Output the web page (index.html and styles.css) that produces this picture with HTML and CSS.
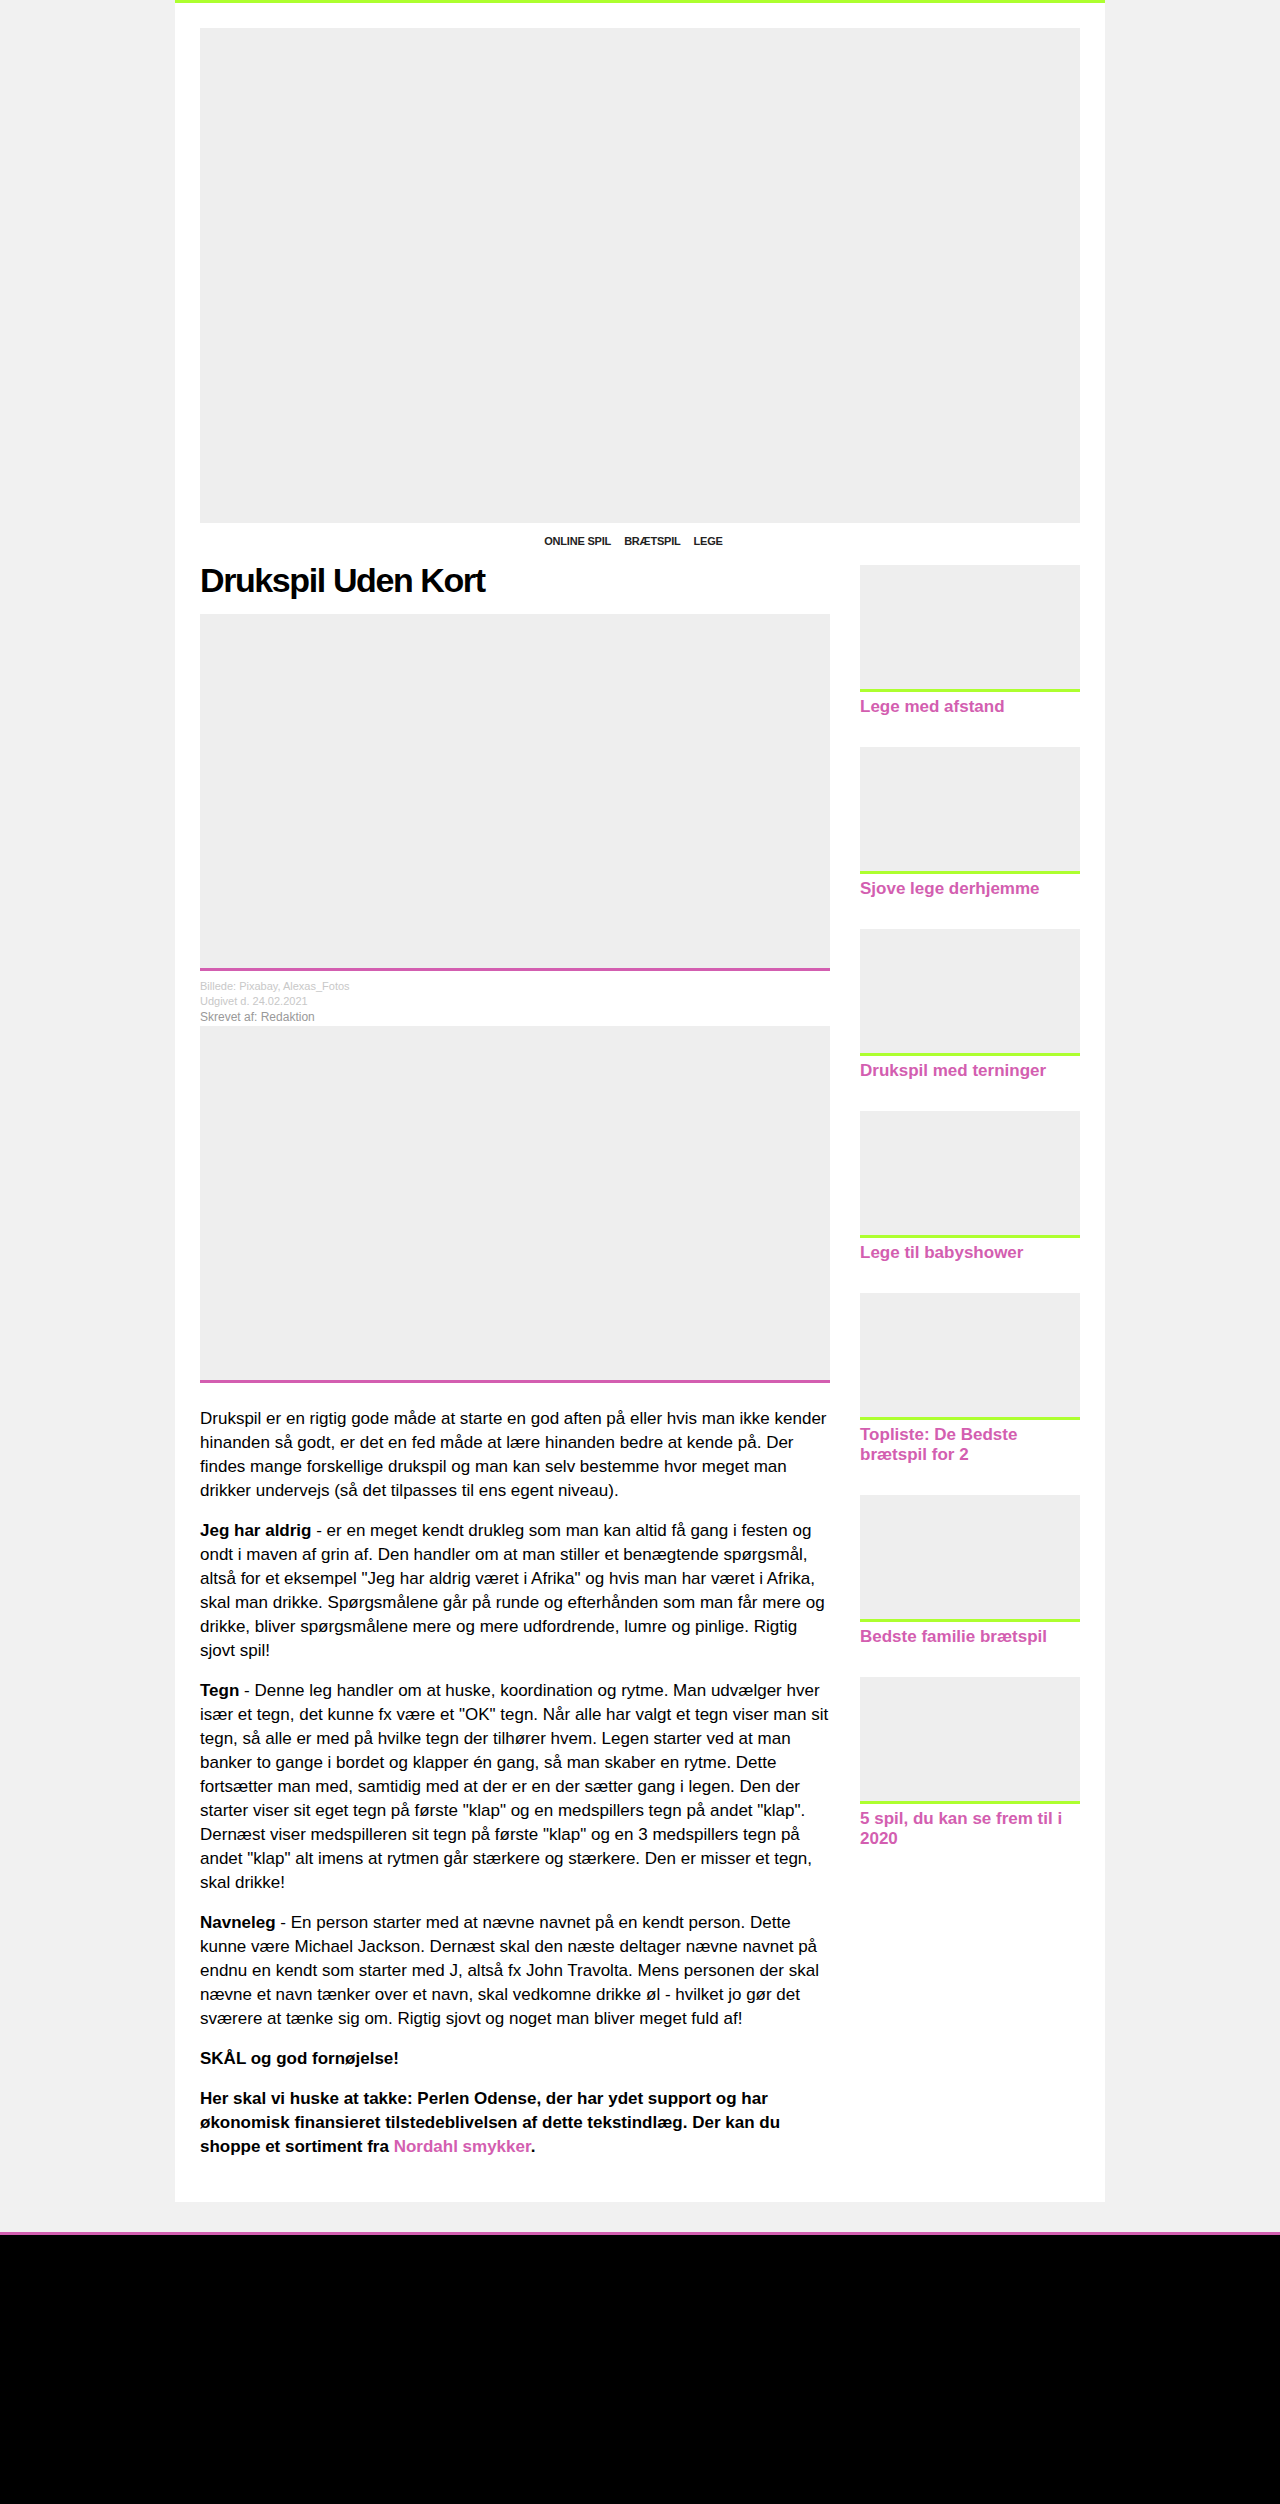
FILE: index.html
```html
<!DOCTYPE html>
<html lang="da">
<head>
<meta charset="utf-8">
<title>Drukspil Uden Kort</title>
<link rel="stylesheet" href="styles.css">
</head>
<body>
<div class="page">
  <div class="ad-top"></div>
  <nav class="nav">
    <a href="#">ONLINE SPIL</a>
    <a href="#">BRÆTSPIL</a>
    <a href="#">LEGE</a>
  </nav>
  <div class="row">
    <main class="main">
      <h1 class="title">Drukspil Uden Kort</h1>
      <div class="pic"></div>
      <div class="meta">
        <div class="meta-line">Billede: Pixabay, Alexas_Fotos</div>
        <div class="meta-line">Udgivet d. 24.02.2021</div>
        <div class="meta-author">Skrevet af: Redaktion</div>
      </div>
      <div class="pic"></div>
      <div class="article">
        <p>Drukspil er en rigtig gode måde at starte en god aften på eller hvis man ikke kender hinanden så godt, er det en fed måde at lære hinanden bedre at kende på. Der findes mange forskellige drukspil og man kan selv bestemme hvor meget man drikker undervejs (så det tilpasses til ens egent niveau).</p>
        <p><b>Jeg har aldrig</b> - er en meget kendt drukleg som man kan altid få gang i festen og ondt i maven af grin af. Den handler om at man stiller et benægtende spørgsmål, altså for et eksempel "Jeg har aldrig været i Afrika" og hvis man har været i Afrika, skal man drikke. Spørgsmålene går på runde og efterhånden som man får mere og drikke, bliver spørgsmålene mere og mere udfordrende, lumre og pinlige. Rigtig sjovt spil!</p>
        <p><b>Tegn</b> - Denne leg handler om at huske, koordination og rytme. Man udvælger hver især et tegn, det kunne fx være et "OK" tegn. Når alle har valgt et tegn viser man sit tegn, så alle er med på hvilke tegn der tilhører hvem. Legen starter ved at man banker to gange i bordet og klapper én gang, så man skaber en rytme. Dette fortsætter man med, samtidig med at der er en der sætter gang i legen. Den der starter viser sit eget tegn på første "klap" og en medspillers tegn på andet "klap". Dernæst viser medspilleren sit tegn på første "klap" og en 3 medspillers tegn på andet "klap" alt imens at rytmen går stærkere og stærkere. Den er misser et tegn, skal drikke!</p>
        <p><b>Navneleg</b> - En person starter med at nævne navnet på en kendt person. Dette kunne være Michael Jackson. Dernæst skal den næste deltager nævne navnet på endnu en kendt som starter med J, altså fx John Travolta. Mens personen der skal nævne et navn tænker over et navn, skal vedkomne drikke øl - hvilket jo gør det sværere at tænke sig om. Rigtig sjovt og noget man bliver meget fuld af!</p>
        <p><b>SKÅL og god fornøjelse!</b></p>
        <p><b>Her skal vi huske at takke: Perlen Odense, der har ydet support og har økonomisk finansieret tilstedeblivelsen af dette tekstindlæg. Der kan du shoppe et sortiment fra <a class="link" href="#">Nordahl smykker</a>.</b></p>
      </div>
    </main>
    <aside class="side">
      <a class="card" href="#"><div class="thumb"></div><div class="card-title">Lege med afstand</div></a>
      <a class="card" href="#"><div class="thumb"></div><div class="card-title">Sjove lege derhjemme</div></a>
      <a class="card" href="#"><div class="thumb"></div><div class="card-title">Drukspil med terninger</div></a>
      <a class="card" href="#"><div class="thumb"></div><div class="card-title">Lege til babyshower</div></a>
      <a class="card" href="#"><div class="thumb"></div><div class="card-title">Topliste: De Bedste brætspil for 2</div></a>
      <a class="card" href="#"><div class="thumb"></div><div class="card-title">Bedste familie brætspil</div></a>
      <a class="card" href="#"><div class="thumb"></div><div class="card-title">5 spil, du kan se frem til i 2020</div></a>
    </aside>
  </div>
</div>
<footer class="footer"></footer>
</body>
</html>
```

FILE: styles.css
```css
* { box-sizing: border-box; }

body {
  margin: 0;
  background: #f1f1f1;
  font-family: "Liberation Sans", Arial, sans-serif;
  color: #000;
}

.page {
  width: 930px;
  margin: 0 auto;
  background: #fff;
  border-top: 3px solid #adff2f;
  padding: 25px 25px 27px;
}

.ad-top {
  height: 495px;
  background: #eee;
}

.nav {
  display: flex;
  justify-content: center;
  margin: 11px 0 0;
  height: 28px;
  font-size: 11px;
  line-height: 14px;
  font-weight: bold;
  letter-spacing: -0.2px;
}

.nav a {
  color: #222;
  text-decoration: none;
  margin-right: 13px;
}

.row {
  display: flex;
  justify-content: space-between;
}

.main {
  width: 630px;
}

.title {
  margin: 0 0 15px;
  font-size: 34px;
  line-height: 37px;
  font-weight: bold;
  letter-spacing: -1.4px;
  color: #000;
}

.pic {
  height: 357px;
  background: #eee;
  border-bottom: 3px solid #d35eb0;
}

.meta {
  padding: 8px 0 1px;
}

.meta-line {
  font-size: 11px;
  line-height: 15px;
  color: #c8c8c8;
}

.meta-author {
  font-size: 12px;
  line-height: 16px;
  color: #999;
}

.article {
  padding-top: 24px;
}

.article p {
  margin: 0 0 16px;
  font-size: 17px;
  line-height: 24px;
}

.article .link {
  color: #d35eb0;
  text-decoration: none;
}

.side {
  width: 220px;
  padding-top: 3px;
}

.card {
  display: block;
  text-decoration: none;
  margin-bottom: 30px;
}

.thumb {
  height: 127px;
  background: #eee;
  border-bottom: 3px solid #adff2f;
}

.card-title {
  padding-top: 5px;
  font-size: 17px;
  line-height: 20px;
  font-weight: bold;
  color: #d35eb0;
}

.footer {
  margin-top: 30px;
  height: 273px;
  background: #000;
  border-top: 3px solid #d35eb0;
}
```
